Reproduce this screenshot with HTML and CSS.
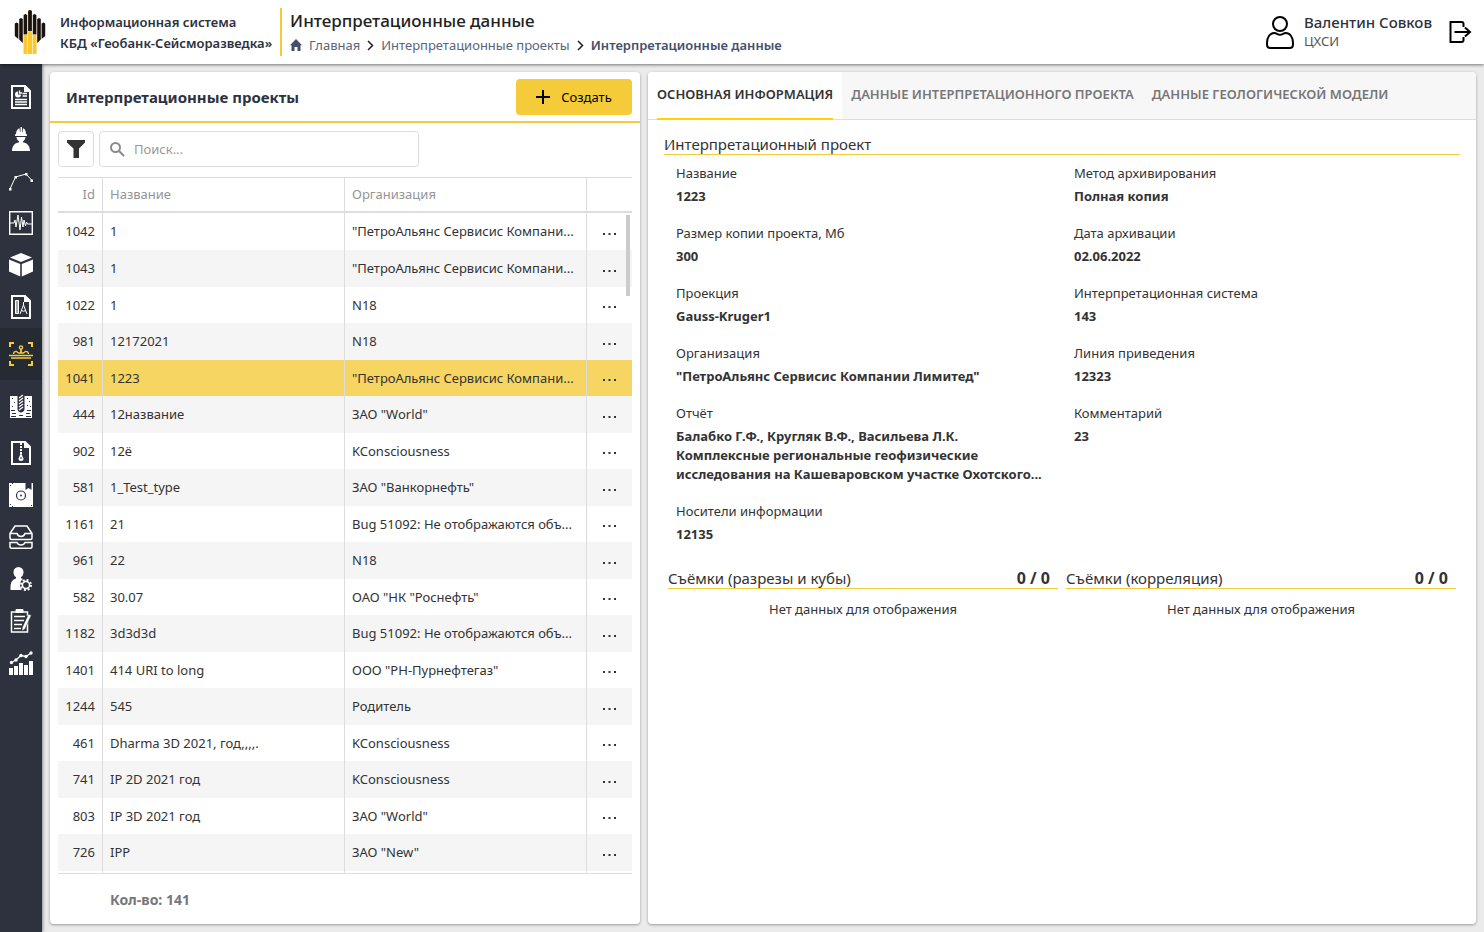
FILE: index.html
```html
<!DOCTYPE html>
<html lang="ru">
<head>
<meta charset="utf-8">
<title>Интерпретационные данные</title>
<link rel="stylesheet" href="styles.css">
</head>
<body>
<svg class="sprite" aria-hidden="true">
  <symbol id="dots" viewBox="0 0 14 8"><path d="M0 5h2v2H0zM5.500 5h2v2h-2zM11 5h2v2h-2z" fill="currentColor"/></symbol>
</svg>
<header class="topbar">
  <svg class="logo" viewBox="0 0 32 44" aria-hidden="true">
    <g fill="#1c120c">
      <path d="M.8 13.500l1.800-1 1.800 1V29L.8 26zM5.200 9l1.800-1 1.800 1v24l-3.600-3.500zM9.600 5l1.800-1 1.800 1v19.500H9.600zM14.100.800L16 0l1.900.800V21h-3.800zM18.800 5l1.800-1 1.800 1v19.500h-3.600zM23.200 9l1.800-1 1.800 1v20.500L23.200 33zM27.600 13.500l1.800-1 1.800 1V26l-3.600 3z"/>
    </g>
    <path d="M9.500 25l3.900-.8V44H9.500zM14 21.500l2-.8 2 .8V44h-4zM18.600 24.200l3.900.8v19h-3.900z" fill="#fdc82f"/>
  </svg>
  <div class="system">Информационная система<br>КБД «Геобанк-Сейсморазведка»</div>
  <div class="heading">
    <h1>Интерпретационные данные</h1>
    <nav class="crumbs" aria-label="Навигация">
      <svg class="home" viewBox="0 0 12 12" aria-hidden="true"><path d="M6 0l6 6.200h-1.500V12H7.500V8h-3v4h-3V6.200H0z" fill="#46506a"/></svg>
      <a href="#">Главная</a>
      <svg class="chevron" viewBox="0 0 7 11" aria-hidden="true"><path d="M1 1l4.500 4.500L1 10" fill="none" stroke="#222" stroke-width="1.500"/></svg>
      <a href="#">Интерпретационные проекты</a>
      <svg class="chevron" viewBox="0 0 7 11" aria-hidden="true"><path d="M1 1l4.500 4.500L1 10" fill="none" stroke="#222" stroke-width="1.500"/></svg>
      <span class="current">Интерпретационные данные</span>
    </nav>
  </div>
  <div class="user">
    <svg class="avatar" viewBox="0 0 28 33" fill="none" stroke="#000" stroke-width="2" aria-hidden="true">
      <circle cx="14" cy="8" r="7"/><path d="M8.500 17C4 17 1 21 1 27v1.500Q1 32 4.500 32h19q3.500 0 3.500-3.500V27c0-6-3-10-7.500-10-2 0-3 1.800-5.500 1.800S10.500 17 8.500 17z"/>
    </svg>
    <div><div class="user-name">Валентин Совков</div><div class="user-org">ЦХСИ</div></div>
    <button class="logout" aria-label="Выход">
      <svg viewBox="0 0 22 22" fill="none" stroke="#000" stroke-width="2"><path d="M14 6V3q0-2-2-2H1v20h11q2 0 2-2v-3M5 11h15M15.500 6.500L20.500 11l-5 4.500"/></svg>
    </button>
  </div>
</header>
<div class="body">
  <nav class="sidebar" aria-label="Разделы">
    <a href="#" aria-label="Отчёты"><svg viewBox="0 0 24 24" fill="none" stroke="#fff"><path d="M3 1h13l5 5v17H3z" stroke-width="2"/><path d="M15 0v7h7z" fill="#fff" stroke="none"/><path d="M9 6.500a3 3 0 1 0 3 3H9z" fill="#fff" stroke="none"/><path d="M10.500 5.500v2.500H13M13.500 8.500H18M13.500 11H18M6 14.500h12M6 17h12M6 19.500h12" stroke-width="1.300"/></svg></a>
    <a href="#" aria-label="Рабочие"><svg viewBox="0 0 24 24" fill="#fff"><path d="M7 7C7 3.500 9 1.500 10.500 1.200L11 5h.5V0h1.500v5h.5l.5-3.800C15.500 1.500 17 3.500 17 7l1 .5V9H6V7.500zM7.500 10h9c-.2 2.200-1 3.400-2.500 4.200v1c4.500.8 7 4 7 8.800H3c0-4.800 2.500-8 7-8.800v-1C8.500 13.400 7.700 12.200 7.500 10z"/></svg></a>
    <a href="#" aria-label="Профили"><svg viewBox="0 0 24 24" fill="#fff"><path d="M1 20L6.500 8 17 5l6 6.500" fill="none" stroke="#fff"/><path d="M0 19h2.500v2.500H0zM5.500 7H8v2.500H5.500zM16 4h2.500v2.500H16zM21.500 10.500H24V13h-2.500z"/></svg></a>
    <a href="#" aria-label="Сейсмика"><svg viewBox="0 0 24 24" fill="none" stroke="#fff"><path d="M.7.700h22.600v22.600H.7z" stroke-width="1.400"/><path d="M1 12h4l1-3 1 7L9 4l2 15 1.500-13L14 16l1-7 1.500 6 1-4 1 2H23"/></svg></a>
    <a href="#" aria-label="Кубы"><svg viewBox="0 0 24 24" fill="#fff"><path d="M12 0l11 4.500-11 4.500L1 4.500zM0 6.500l11.200 4.500v12.500L0 18.500zM24 6.500L12.800 11v12.500L24 18.500z"/></svg></a>
    <a href="#" aria-label="Документы"><svg viewBox="0 0 24 24" fill="none" stroke="#fff"><path d="M3 1h13l5 5v17H3z" stroke-width="2"/><path d="M15 0v7h7z" fill="#fff" stroke="none"/><path d="M6.500 5.500h3v13h-3z" fill="#a7abb3"/><path d="M14.500 7v3M14.500 10l-3.500 9M14.500 10l3.500 9M12 15.500q2.500 1.500 5 0"/></svg></a>
    <a href="#" class="active tall" aria-label="Интерпретация"><svg viewBox="0 0 24 24" fill="none" stroke="#f5cb3a"><path d="M1 5V1h4M19 1h4v4M1 19v4h4M19 23h4v-4" stroke-width="2"/><path d="M0 13.500h24M2 16h20" stroke-width="1.600"/><path d="M4.500 12c0-2 1.500-2.700 3-2.700L9.500 11h5l2-1.700c1.500 0 3 .7 3 2.700" stroke-width="1.300"/><path d="M12 11V7" stroke-width="1.800"/><circle cx="12" cy="5.500" r="1.600" stroke-width="1.400"/></svg></a>
    <a href="#" class="tall" aria-label="Скважины"><svg viewBox="0 0 24 24"><path d="M1 2h22v22H1z" fill="#fff"/><path d="M8.500 0h7v15.500q-1 3-3.500 3t-3.500-3z" fill="#2d323e"/><path d="M10 4l4-3M10 7l4-3M10 10l4-3M10 13l4-3M10 16l4-3" stroke="#fff" stroke-width="1.200"/><path d="M3 4.500h1M5 8.500h1M3 12.500h1M18 4.500h1M20 7.500h1M18 11.500h1M21 12.500h1M2 16.500h4M18 16.500h4M3 19.500h4M10 21.500h4M17 19.500h4M2 22.500h5M17 22.500h5" stroke="#2d323e"/></svg></a>
    <a href="#" aria-label="Архивы"><svg viewBox="0 0 24 24" fill="none" stroke="#fff"><path d="M3 1h13l5 5v17H3z" stroke-width="2"/><path d="M15 0v7h7z" fill="#fff" stroke="none"/><path d="M12 2v11" stroke-width="2" stroke-dasharray="2 1"/><path d="M12 12l2.500 5.500q0 2.500-2.500 2.500t-2.500-2.500z" fill="#fff" stroke="none"/><path d="M12 16v2" stroke="#2d323e"/></svg></a>
    <a href="#" aria-label="Носители"><svg viewBox="0 0 24 24"><path d="M0 0h24v24H0z" fill="#fff"/><path d="M16.500 0h6v7l-3-2-3 2z" fill="#2d323e"/><circle cx="12" cy="12.500" r="4.500" fill="none" stroke="#2d323e" stroke-width="1.200"/><circle cx="12" cy="12.500" r="1" fill="#2d323e"/><path d="M1 2.500h1M3 .5h1M1 21.500h1M3 23.500h1M22 22.500h1" stroke="#2d323e"/></svg></a>
    <a href="#" aria-label="Хранилище"><svg viewBox="0 0 24 24" fill="none" stroke="#fff" stroke-width="1.500"><path d="M1 8.500L6 1h12l5 7.500V13q0 1.500-1.500 1.500h-19Q1 14.500 1 13zM1 8.500h7q1 3 4 3t4-3h7M1 17.500h7q1 2.500 4 2.500t4-2.500h7v3.700q0 2-1.500 2h-19q-1.500 0-1.500-2z"/></svg></a>
    <a href="#" aria-label="Пользователи"><svg viewBox="0 0 24 24" fill="#fff"><path d="M9.500 0a5 5 0 0 1 5 5.200c0 2-1 4-2.500 5v1l2 .9c-3 1.800-4.200 6.400-1.200 10.900H1.500c0-6 0-9.500 5.500-11.500v-1.300c-1.500-1-2.500-3-2.500-5A5 5 0 0 1 9.500 0z"/><circle cx="17" cy="18" r="3.600" fill="none" stroke="#fff" stroke-width="1.600"/><circle cx="17" cy="18" r="5.100" fill="none" stroke="#fff" stroke-width="1.800" stroke-dasharray="2 2"/></svg></a>
    <a href="#" aria-label="Задания"><svg viewBox="0 0 24 24" fill="none" stroke="#fff"><path d="M18.500 12v11H2.500V3h16v4" stroke-width="1.500"/><path d="M7 .5h7v3H7z" fill="#fff"/><path d="M5 7.500h11M5 11.500h10M5 15.500h8M5 19.500h7" stroke-width="1.500"/><path d="M19.500 5l2.800 1.300L16 20l-3 2 .2-3.300z" fill="#fff" stroke="#2d323e" stroke-width=".5"/></svg></a>
    <a href="#" aria-label="Статистика"><svg viewBox="0 0 24 24" fill="#fff"><path d="M0 17h4v7H0zM5 15h4v9H5zM10 12h4v12h-4zM15 14h4v10h-4zM20 10h4v14h-4z"/><path d="M2.500 11.500L7 9l5-4.500 5 1L22 2" fill="none" stroke="#fff" stroke-width="1.300"/><circle cx="2.500" cy="11.500" r="1.700"/><circle cx="7" cy="9" r="1.700"/><circle cx="12" cy="4.500" r="1.700"/><circle cx="17" cy="5.500" r="1.700"/><circle cx="22" cy="2" r="1.700"/></svg></a>
  </nav>
  <main class="panels">
    <section class="card list">
      <div class="list-head">
        <h2>Интерпретационные проекты</h2>
        <button class="create"><svg viewBox="0 0 14 14" aria-hidden="true"><path d="M7 0v14M0 7h14" stroke="#000" stroke-width="2"/></svg>Создать</button>
      </div>
      <div class="tools">
        <button class="filter" aria-label="Фильтр"><svg viewBox="0 0 18 18"><path d="M0 0h18v2.500l-6 6V18H6.500V8.500L0 2.500z" fill="#333"/></svg></button>
        <label class="search">
          <svg viewBox="0 0 15 15" fill="none" stroke="#8a8a8a" stroke-width="2" aria-hidden="true"><circle cx="5.500" cy="5.500" r="4.500"/><path d="M9 9l5 5"/></svg>
          <input type="text" placeholder="Поиск..." aria-label="Поиск">
        </label>
      </div>
      <div class="grid">
        <table>
          <colgroup><col class="c-id"><col><col><col class="c-act"></colgroup>
          <thead><tr><th>Id</th><th>Название</th><th>Организация</th><th></th></tr></thead>
          <tbody>
            <tr><td>1042</td><td>1</td><td>"ПетроАльянс Сервисис Компани...</td><td><button aria-label="Меню"><svg><use href="#dots"/></svg></button></td></tr>
            <tr><td>1043</td><td>1</td><td>"ПетроАльянс Сервисис Компани...</td><td><button aria-label="Меню"><svg><use href="#dots"/></svg></button></td></tr>
            <tr><td>1022</td><td>1</td><td>N18</td><td><button aria-label="Меню"><svg><use href="#dots"/></svg></button></td></tr>
            <tr><td>981</td><td>12172021</td><td>N18</td><td><button aria-label="Меню"><svg><use href="#dots"/></svg></button></td></tr>
            <tr class="selected"><td>1041</td><td>1223</td><td>"ПетроАльянс Сервисис Компани...</td><td><button aria-label="Меню"><svg><use href="#dots"/></svg></button></td></tr>
            <tr><td>444</td><td>12название</td><td>ЗАО "World"</td><td><button aria-label="Меню"><svg><use href="#dots"/></svg></button></td></tr>
            <tr><td>902</td><td>12ё</td><td>KConsciousness</td><td><button aria-label="Меню"><svg><use href="#dots"/></svg></button></td></tr>
            <tr><td>581</td><td>1_Test_type</td><td>ЗАО "Ванкорнефть"</td><td><button aria-label="Меню"><svg><use href="#dots"/></svg></button></td></tr>
            <tr><td>1161</td><td>21</td><td>Bug 51092: Не отображаются объ...</td><td><button aria-label="Меню"><svg><use href="#dots"/></svg></button></td></tr>
            <tr><td>961</td><td>22</td><td>N18</td><td><button aria-label="Меню"><svg><use href="#dots"/></svg></button></td></tr>
            <tr><td>582</td><td>30.07</td><td>ОАО "НК "Роснефть"</td><td><button aria-label="Меню"><svg><use href="#dots"/></svg></button></td></tr>
            <tr><td>1182</td><td>3d3d3d</td><td>Bug 51092: Не отображаются объ...</td><td><button aria-label="Меню"><svg><use href="#dots"/></svg></button></td></tr>
            <tr><td>1401</td><td>414 URI to long</td><td>ООО "РН-Пурнефтегаз"</td><td><button aria-label="Меню"><svg><use href="#dots"/></svg></button></td></tr>
            <tr><td>1244</td><td>545</td><td>Родитель</td><td><button aria-label="Меню"><svg><use href="#dots"/></svg></button></td></tr>
            <tr><td>461</td><td>Dharma 3D 2021, год,,,,.</td><td>KConsciousness</td><td><button aria-label="Меню"><svg><use href="#dots"/></svg></button></td></tr>
            <tr><td>741</td><td>IP 2D 2021 год</td><td>KConsciousness</td><td><button aria-label="Меню"><svg><use href="#dots"/></svg></button></td></tr>
            <tr><td>803</td><td>IP 3D 2021 год</td><td>ЗАО "World"</td><td><button aria-label="Меню"><svg><use href="#dots"/></svg></button></td></tr>
            <tr><td>726</td><td>IPP</td><td>ЗАО "New"</td><td><button aria-label="Меню"><svg><use href="#dots"/></svg></button></td></tr>
            <tr><td></td><td></td><td></td><td></td></tr>
          </tbody>
        </table>
        <div class="thumb"></div>
      </div>
      <div class="total">Кол-во: 141</div>
    </section>
    <section class="card">
      <div class="tabs" role="tablist">
        <button role="tab" aria-selected="true"><span>ОСНОВНАЯ ИНФОРМАЦИЯ</span></button>
        <button role="tab" aria-selected="false"><span>ДАННЫЕ ИНТЕРПРЕТАЦИОННОГО ПРОЕКТА</span></button>
        <button role="tab" aria-selected="false"><span>ДАННЫЕ ГЕОЛОГИЧЕСКОЙ МОДЕЛИ</span></button>
      </div>
      <div class="details">
        <h3 class="section-title">Интерпретационный проект</h3>
        <dl class="fields">
          <div><dt>Название</dt><dd>1223</dd></div>
          <div><dt>Метод архивирования</dt><dd>Полная копия</dd></div>
          <div><dt>Размер копии проекта, Мб</dt><dd>300</dd></div>
          <div><dt>Дата архивации</dt><dd>02.06.2022</dd></div>
          <div><dt>Проекция</dt><dd>Gauss-Kruger1</dd></div>
          <div><dt>Интерпретационная система</dt><dd>143</dd></div>
          <div><dt>Организация</dt><dd>"ПетроАльянс Сервисис Компании Лимитед"</dd></div>
          <div><dt>Линия приведения</dt><dd>12323</dd></div>
          <div><dt>Отчёт</dt><dd>Балабко Г.Ф., Кругляк В.Ф., Васильева Л.К.<br>Комплексные региональные геофизические<br>исследования на Кашеваровском участке Охотского...</dd></div>
          <div><dt>Комментарий</dt><dd>23</dd></div>
          <div><dt>Носители информации</dt><dd>12135</dd></div>
        </dl>
        <div class="surveys">
          <section><h3 class="section-title">Съёмки (разрезы и кубы)<b>0 / 0</b></h3><p>Нет данных для отображения</p></section>
          <section><h3 class="section-title">Съёмки (корреляция)<b>0 / 0</b></h3><p>Нет данных для отображения</p></section>
        </div>
      </div>
    </section>
  </main>
</div>
</body>
</html>
```
FILE: styles.css
```css
* { box-sizing: border-box; }
body {
  margin: 0;
  height: 100vh;
  display: flex;
  flex-direction: column;
  background: #ebebeb;
  color: #333;
  font: 13px/19px "Noto Sans", "Open Sans", sans-serif;
}
h1, h2, h3, p, dl, dd { margin: 0; }
button { font: inherit; color: inherit; border: 0; padding: 0; background: none; }
a { color: inherit; text-decoration: none; }
svg { display: block; flex: none; }
.sprite { display: none; }

.topbar {
  display: flex;
  align-items: center;
  height: 64px;
  padding: 0 12px 0 14px;
  background: #fff;
  box-shadow: 0 1px 3px rgba(0, 0, 0, .5);
  position: relative;
}
.logo { width: 32px; height: 44px; margin-right: 14px; }
.system { padding-top: 2px; line-height: 21px; font-weight: 600; color: #2d323e; white-space: nowrap; }
.heading {
  margin-left: 8px;
  padding-left: 8px;
  height: 48px;
  border-left: 2px solid #f5cb3a;
  white-space: nowrap;
}
h1 { font-size: 17px; line-height: 26px; font-weight: 500; color: #222; }
.crumbs { display: flex; align-items: center; gap: 7px; line-height: 22px; color: #5a6478; }
.home { width: 12px; height: 12px; }
.chevron { width: 7px; height: 11px; }
.current { font-weight: 600; color: #46506a; }
.user { display: flex; align-items: center; gap: 10px; margin-left: auto; white-space: nowrap; }
.avatar { width: 28px; height: 33px; }
.user-name { font-size: 15px; font-weight: 500; color: #2d323e; }
.user-org { font-size: 13px; color: #555; }
.logout { margin-left: 7px; }
.logout svg { width: 23px; height: 22px; }

.body { flex: 1; min-height: 0; display: flex; }
.sidebar { width: 42px; flex: none; padding-top: 12px; background: #2d323e; box-shadow: 1px 0 3px rgba(0, 0, 0, .4); }
.sidebar a { display: flex; align-items: center; justify-content: center; height: 42px; }
.sidebar .tall { height: 52px; }
.sidebar .active { background: #262a33; }
.sidebar svg { width: 24px; height: 24px; }

.panels { flex: 1; min-width: 0; display: grid; grid-template-columns: 590fr 828fr; gap: 8px; padding: 8px; }
.card {
  min-width: 0;
  min-height: 0;
  display: flex;
  flex-direction: column;
  overflow: hidden;
  background: #fff;
  border-radius: 4px;
  box-shadow: 0 1px 3px rgba(0, 0, 0, .35);
}
.list-head {
  display: flex;
  align-items: center;
  justify-content: space-between;
  padding: 7px 8px 6px 16px;
  border-bottom: 2px solid #f5cb3a;
}
h2 { font-size: 15px; font-weight: 700; color: #2d323e; }
.create {
  display: flex;
  align-items: center;
  justify-content: center;
  gap: 11px;
  width: 116px;
  height: 36px;
  border-radius: 4px;
  background: #f5cb3a;
  color: #000;
}
.create svg { width: 14px; height: 14px; }
.tools { display: flex; gap: 5px; padding: 8px 8px 10px; }
.filter { width: 36px; height: 36px; display: grid; place-items: center; border: 1px solid #ddd; border-radius: 4px; }
.filter svg { width: 18px; height: 18px; }
.search { display: flex; align-items: center; gap: 9px; width: 320px; padding: 0 10px; border: 1px solid #ddd; border-radius: 4px; }
.search svg { width: 15px; height: 15px; }
.search input { flex: 1; min-width: 0; border: 0; padding: 0; outline: 0; font: inherit; color: #333; background: none; }
.search input::placeholder { color: #999; opacity: 1; }

.grid { flex: 1; min-height: 0; margin: 0 8px; overflow: hidden; position: relative; border: 1px solid #ddd; border-width: 1px 0; }
table { width: 100%; table-layout: fixed; border-collapse: separate; border-spacing: 0; }
.c-id { width: 45px; }
.c-act { width: 45px; }
th, td { padding: 0 7px; text-align: left; font-weight: 400; white-space: nowrap; overflow: hidden; text-overflow: ellipsis; border-right: 1px solid #ddd; }
th { height: 35px; color: #959595; border-bottom: 2px solid #ddd; }
td { height: 36px; }
tr:first-child td { height: 37px; }
tr:nth-child(even) td { height: 37px; background: #f5f5f5; }
.selected td { background: #f6d563; }
th:first-child, td:first-child { text-align: right; padding-left: 0; }
th:last-child, td:last-child { border-right: 0; }
td button { display: block; margin: 0 auto; }
td svg { width: 14px; height: 8px; }
.thumb { position: absolute; top: 37px; right: 2px; width: 4px; height: 81px; background: #ccc; }
.total { padding: 16px 60px 15px; font-size: 14px; line-height: 19px; font-weight: 700; color: #777; }

.tabs { display: flex; height: 48px; background: #f7f7f7; border-bottom: 1px solid #ddd; white-space: nowrap; }
.tabs button { display: flex; padding: 0 9px; font-weight: 600; color: #777; }
.tabs span { padding-top: 13px; height: 48px; }
.tabs [aria-selected="true"] { background: #fff; color: #333; }
.tabs [aria-selected="true"] span { border-bottom: 2px solid #ffd200; }
.details { padding: 14px 16px; }
.section-title { display: flex; justify-content: space-between; border-bottom: 1px solid #f5cb3a; font-size: 15px; line-height: 20px; font-weight: 400; }
.section-title b { margin-right: 8px; font-size: 16px; }
.fields { display: grid; grid-template-columns: 1fr 1fr; row-gap: 18px; padding-top: 9px; }
.fields > div { padding-left: 12px; min-width: 0; }
dd { margin-top: 4px; font-weight: 700; }
.surveys { display: grid; grid-template-columns: 1fr 1fr; gap: 8px; padding: 24px 4px; }
.surveys p { padding-top: 11px; text-align: center; }
```
